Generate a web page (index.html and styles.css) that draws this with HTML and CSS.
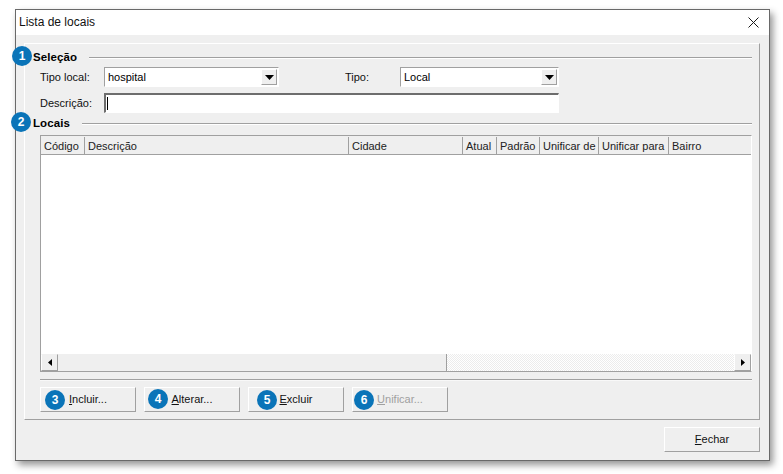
FILE: index.html
```html
<!DOCTYPE html>
<html lang="pt">
<head>
<meta charset="utf-8">
<title>Lista de locais</title>
<link rel="stylesheet" href="styles.css">
</head>
<body>
<div class="window">
  <div class="titlebar">
    <span class="title">Lista de locais</span>
    <svg class="close" width="11" height="11" viewBox="0 0 11 11"><path d="M.5.5l10 10M10.500.5l-10 10" stroke="#1a1a1a" stroke-width="1" fill="none"/></svg>
  </div>
  <div class="client">
    <div class="panel">
      <section class="selecao">
        <div class="heading"><span class="badge badge-h">1</span><span class="heading-text">Seleção</span><span class="rule"></span></div>
        <div class="fields">
          <div class="row row-combos">
            <label class="lbl lbl-first">Tipo local:</label>
            <div class="combo combo-a"><span class="combo-val">hospital</span><span class="combo-btn"><svg width="9" height="5" viewBox="0 0 9 5"><path d="M0 0h9L4.500 5z" fill="#000"/></svg></span></div>
            <label class="lbl lbl-tipo">Tipo:</label>
            <div class="combo combo-b"><span class="combo-val">Local</span><span class="combo-btn"><svg width="9" height="5" viewBox="0 0 9 5"><path d="M0 0h9L4.500 5z" fill="#000"/></svg></span></div>
          </div>
          <div class="row row-desc">
            <label class="lbl lbl-first">Descrição:</label>
            <div class="input"><span class="caret"></span></div>
          </div>
        </div>
      </section>
      <section class="locais">
        <div class="heading heading-2"><span class="badge badge-h2">2</span><span class="heading-text">Locais</span><span class="rule"></span></div>
        <div class="grid">
          <div class="grid-head">
            <span class="col c1">Código</span>
            <span class="col c2">Descrição</span>
            <span class="col c3">Cidade</span>
            <span class="col c4">Atual</span>
            <span class="col c5">Padrão</span>
            <span class="col c6">Unificar de</span>
            <span class="col c7">Unificar para</span>
            <span class="col c8">Bairro</span>
          </div>
          <div class="grid-body"></div>
          <div class="hscroll">
            <span class="sb-btn"><svg width="4" height="7" viewBox="0 0 4 7"><path d="M4 0v7L0 3.500z" fill="#000"/></svg></span>
            <span class="sb-thumb"></span>
            <span class="sb-track"></span>
            <span class="sb-btn sb-right"><svg width="4" height="7" viewBox="0 0 4 7"><path d="M0 0v7l4-3.500z" fill="#000"/></svg></span>
          </div>
        </div>
        <div class="sep"></div>
        <div class="actions">
          <button class="btn" type="button"><span class="badge badge-b b3">3</span><span><u>I</u>ncluir...</span></button>
          <button class="btn" type="button"><span class="badge badge-b b4">4</span><span><u>A</u>lterar...</span></button>
          <button class="btn" type="button"><span class="badge badge-b b5">5</span><span><u>E</u>xcluir</span></button>
          <button class="btn is-disabled" type="button"><span class="badge badge-b b6">6</span><span><u>U</u>nificar...</span></button>
        </div>
      </section>
    </div>
    <div class="footer">
      <button class="btn" type="button"><span><u>F</u>echar</span></button>
    </div>
  </div>
</div>
</body>
</html>
```

FILE: styles.css
```css
* { box-sizing: border-box; }
html, body { margin: 0; height: 100%; background: #fff; overflow: hidden; }
body {
  padding: 9px 13px 0 15px;
  font: 11px/13px "Liberation Sans", sans-serif;
  color: #000;
}
.window {
  width: 755px;
  height: 452px;
  border: 1px solid #696969;
  background: #efefef;
  box-shadow: 3px 4px 7px rgba(0, 0, 0, .42);
  display: flex;
  flex-direction: column;
}
.titlebar {
  height: 25px;
  background: #fff;
  display: flex;
  align-items: center;
  justify-content: space-between;
  padding: 0 10px 0 3px;
  flex: none;
}
.title { font-size: 12px; color: #111; }
.close { display: block; margin-top: -1px; }
.client { flex: 1; padding: 8px 9px 8px 8px; display: flex; flex-direction: column; }
.panel {
  height: 377px;
  border: 1px solid;
  border-color: #fff #a0a0a0 #a0a0a0 #fff;
  padding: 6px 7px 0 15px;
}
.heading { display: flex; align-items: center; height: 15px; position: relative; margin-left: -7px; }
.heading-text { font-weight: 700; font-size: 11.5px; line-height: 15px; letter-spacing: .1px; }
.rule { flex: 1; height: 1px; background: #a0a0a0; margin-left: 12px; box-shadow: 0 1px 0 #fff; }
.badge {
  width: 20px;
  height: 20px;
  border-radius: 50%;
  background: #0a74b8;
  color: #fff;
  font: 700 12px/20px "Liberation Sans", sans-serif;
  text-align: center;
  flex: none;
}
.badge-h { position: absolute; left: -21px; top: -4px; }
.badge-h2 { position: absolute; left: -22px; top: -4px; }
.fields { padding-top: 2px; }
.row { display: flex; align-items: center; height: 20px; }
.row-desc { margin-top: 6px; }
.lbl { color: #111; }
.lbl-first { width: 64px; flex: none; }
.lbl-tipo { width: 55px; margin-left: 66px; flex: none; }
.combo {
  height: 20px;
  flex: none;
  border: 1px solid;
  border-color: #a0a0a0 #fff #fff #a0a0a0;
  background: #fff;
  display: flex;
  align-items: center;
  justify-content: space-between;
  padding: 0 1px 0 3px;
}
.combo-a { width: 175px; }
.combo-b { width: 159px; }
.combo-btn {
  width: 16px;
  height: 16px;
  background: #efefef;
  border: 1px solid;
  border-color: #fff #a0a0a0 #a0a0a0 #fff;
  display: flex;
  align-items: center;
  justify-content: center;
}
.input {
  width: 455px;
  height: 20px;
  border: 1px solid #fff;
  border-top: 2px solid #6d6d6d;
  border-left: 2px solid #6d6d6d;
  background: #fff;
  flex: none;
  padding: 2px 0 0 1px;
}
.caret { display: block; width: 1px; height: 13px; background: #000; }
.locais { margin-top: 3px; }
.grid {
  margin-top: 4px;
  height: 237px;
  border: 1px solid #a0a0a0;
  border-right-color: #fff;
  background: #fff;
  display: flex;
  flex-direction: column;
}
.grid-head {
  height: 19px;
  flex: none;
  display: flex;
  background: #efefef;
  border-bottom: 1px solid #a0a0a0;
}
.col { border-right: 1px solid #a0a0a0; padding-left: 3px; line-height: 18px; height: 17px; margin-top: 1px; white-space: nowrap; flex: none; overflow: hidden; color: #222; }
.c1 { width: 44px; }
.c2 { width: 264px; }
.c3 { width: 114px; }
.c4 { width: 34px; }
.c5 { width: 43px; }
.c6 { width: 59px; }
.c7 { width: 70px; }
.c8 { flex: 1; border-right: 0; }
.grid-body { flex: 1; }
.hscroll { height: 17px; flex: none; display: flex; background: #efefef; }
.sb-btn {
  width: 17px;
  flex: none;
  border: 1px solid;
  border-color: #efefef #a0a0a0 #a0a0a0 #fff;
  display: flex;
  align-items: center;
  justify-content: center;
  background: #efefef;
}
.sb-thumb { width: 389px; flex: none; border-right: 1px solid #a0a0a0; }
.sb-track {
  flex: 1;
  background: repeating-conic-gradient(#ececec 0 25%, #fff 0 50%) 0 0 / 2px 2px;
}
.sep { height: 2px; margin-top: 7px; background: #a0a0a0; border-bottom: 1px solid #f8f8f8; }
.actions { display: flex; gap: 8px; margin-top: 6px; }
.btn {
  width: 96px;
  height: 25px;
  background: #efefef;
  border: 1px solid;
  border-color: #fff #a0a0a0 #a0a0a0 #fff;
  font: inherit;
  color: #111;
  padding: 0;
  display: flex;
  align-items: center;
  justify-content: center;
  position: relative;
}
.badge-b { position: absolute; top: 2px; }
.b3 { left: 4px; }
.b4 { left: 3px; top: 1px; }
.b5 { left: 8px; }
.b6 { left: 1px; }
.is-disabled { color: #a0a0a0; }
.footer { display: flex; justify-content: flex-end; padding-top: 7px; }
```
